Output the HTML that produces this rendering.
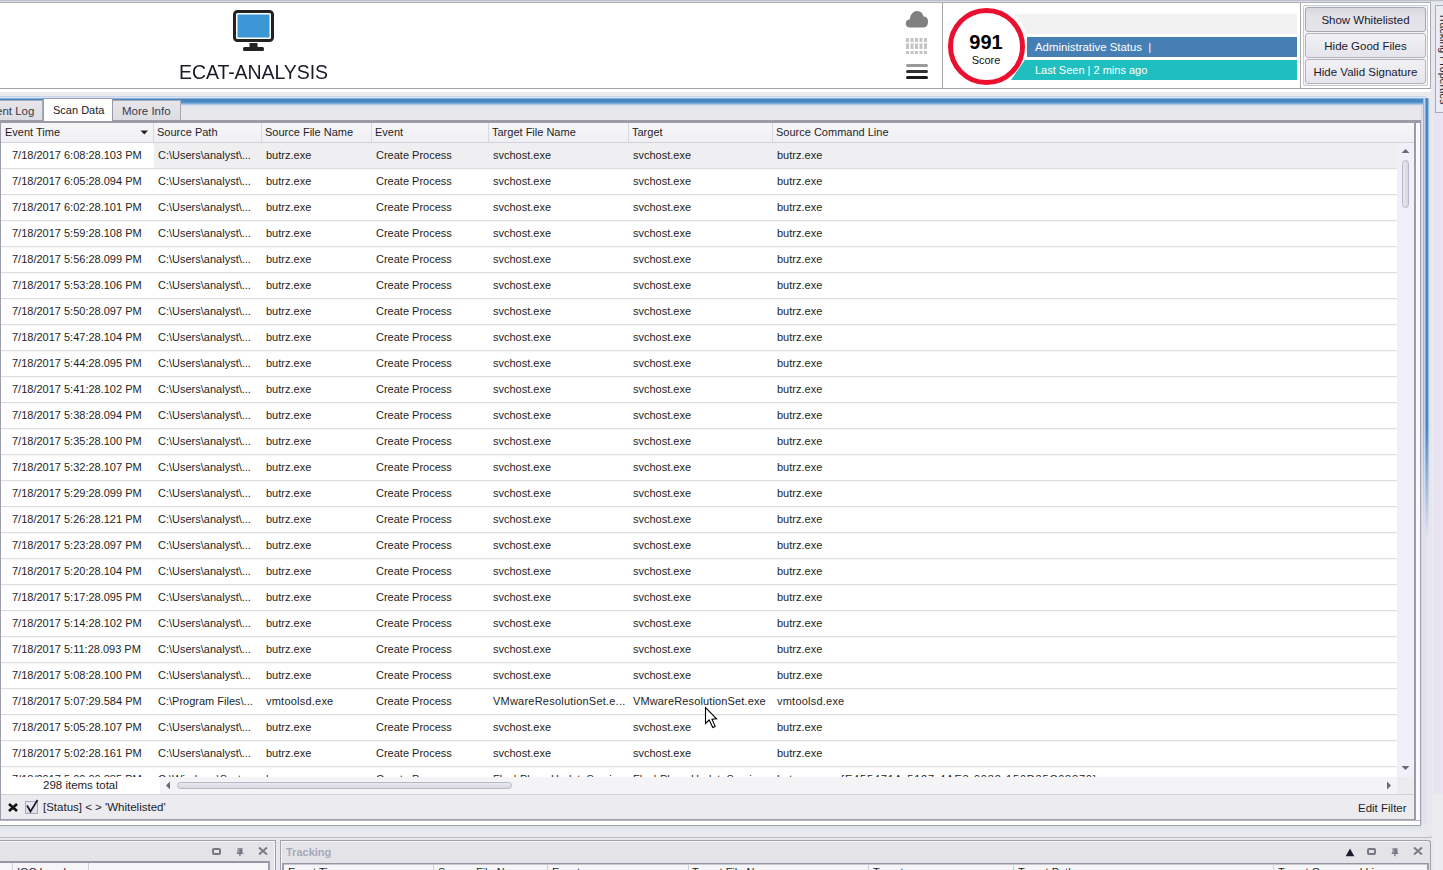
<!DOCTYPE html>
<html><head><meta charset="utf-8"><title>ECAT-ANALYSIS</title>
<style>
*{margin:0;padding:0;box-sizing:border-box}
html,body{width:1443px;height:870px;overflow:hidden}
body{position:relative;background:#e8e8ee;font-family:"Liberation Sans",sans-serif;color:#1e1e24}
.a{position:absolute}
/* header */
#topstrip{left:0;top:0;width:1443px;height:2px;background:linear-gradient(#bcc0cc 0 1px,#dcdee6 1px 2px)}
#hdr{left:0;top:2px;width:1431px;height:87px;background:#fff;border-top:1px solid #b0b0b4;border-right:1px solid #a8a8b0;border-bottom:1px solid #a4a4a8}
#title{left:179px;top:60px;font-size:21px;letter-spacing:-0.1px;transform:scaleX(0.93);transform-origin:0 0;color:#1a1a2a;white-space:nowrap}
.vsep{width:1px;background:#a8a8a8}
#score{left:948px;top:8px;width:77px;height:77px;border-radius:50%;border:5.2px solid #ec1030;background:#fff}
#halo{left:944.2px;top:4.3px;width:84px;height:84px;border-radius:50%;background:#fff}
#n991{left:947px;top:30.5px;width:78px;text-align:center;font-size:20px;font-weight:bold;color:#000}
#nscore{left:947px;top:54px;width:78px;text-align:center;font-size:11px;color:#111}
#bar0{left:1011px;top:14px;width:286px;height:20px;background:#f2f2f2}
#bar1{left:1026.6px;top:37px;width:270.4px;height:20px;background:#467fb4}
#bar2{left:1011px;top:60px;width:286px;height:20px;background:#1fbfbf;clip-path:polygon(13.8px 0,100% 0,100% 100%,0 100%)}
.bt{color:#fff;font-size:11.4px;left:1035px;white-space:nowrap}
#btngrp{left:1303px;top:5px;width:125px;height:81px;border:1px solid #c8c8d0;border-radius:2px;background:#f4f4f8}
.btn{left:1305px;width:121px;height:25px;border:1px solid #b4b4bc;border-radius:3px;background:linear-gradient(#f2f2f6,#e4e4ea);font-size:11.5px;text-align:center;line-height:24px;color:#1a1a2e;white-space:nowrap}
.btn.pressed{background:linear-gradient(#d8d8de,#e2e2e8 40%,#e4e4ea);border-color:#a8a8b0}
/* right side tab */
#rtab{z-index:4;left:1435px;top:5px;width:10px;height:108px;background:#ececf4;border:1px solid #a8acb8;border-right:none}
/* main panel */
#mainbg{left:-4px;top:89px;width:1437px;height:749px;background:#e9e9ee;border-right:1px solid #cccadc;border-bottom:1px solid #bcbcc6;border-bottom-right-radius:4px}
#white1{left:0;top:89px;width:1431px;height:3px;background:#fff}
#blueband{left:0;top:96px;width:1426px;height:11px;background:linear-gradient(#c8d4e8 0 1px,#dce4f8 1px 2px,#88b0d8 2px 3px,#4a88c4 3px 6px,#5a94ca 6px 7px,#80acd8 7px 8px,#b0c8e4 8px 9px,#d4dcec 9px 10px,#e6e8ee 10px)}
#blueR{left:1421px;top:105px;width:11px;height:720px;background:linear-gradient(90deg,#d4d4dc 0 1px,#e4e2ee 1px 4px,#dce2f4 4px 5px,#e8e6f0 5px)}
#blueLine{left:1423px;top:98px;width:8px;height:440px;background:linear-gradient(90deg,#98b8e0 0 1px,#c0d8f4 1px 2px,#7aa8dc 2px 3px,#4a88c4 3px 5px,#a0c0e0 5px 6px,#d8e0ee 6px 7px,#e4e6ee 7px);-webkit-mask-image:linear-gradient(#000 0 330px,transparent 440px);border-top-right-radius:4px}
#edge1432{display:none}
#tabstrip{left:0;top:107px;width:1421px;height:14px;background:#e8e8ec}
.tab{top:100px;height:21px;background:linear-gradient(#e6e6ea,#dcdce2);border:1px solid #a8a8b4;border-bottom:none;font-size:11.5px;color:#2a2a3a;white-space:nowrap;line-height:21px}
#tabsel{left:43px;top:98px;width:70px;height:23px;background:#fff;border:1px solid #9a9aa8;border-bottom:none;font-size:11.5px;color:#1a1a2a;line-height:19px}
#tabline{left:0;top:120px;width:1421px;height:3px;background:#9c9ca8}
#grid{left:0;top:123px;width:1421px;height:697px;background:#fff;border-left:1px solid #9a9caa;border-right:1px solid #a0a4b0;border-bottom:2px solid #9a9caa}
#gridR{left:1414px;top:123px;width:2px;height:697px;background:#9a9cac}
#gridRw{left:1416px;top:123px;width:4px;height:697px;background:#fafafa}
#ghdr{left:1px;top:123px;width:1413px;height:20px;background:linear-gradient(#f6f6f8,#f0f0f4);border-bottom:1px solid #d2d2da}
.hc{top:123px;height:19px;font-size:11px;line-height:19px;color:#1e1e2a;white-space:nowrap}
.hs{top:123px;width:1px;height:19px;background:#d8d8e0}
.row{position:absolute;left:1px;width:1396px;height:26px;border-bottom:1px solid #dcdce2;background:linear-gradient(#f9f9fa 0 1px,#fff 1px)}
.row span{position:absolute;top:0;line-height:25px;font-size:11px;white-space:nowrap;color:#1e1e24}
.row.sel{background:linear-gradient(90deg,#fff 0 153px,#efeff2 153px)}
#rowsclip{left:0;top:0;width:1443px;height:777px;overflow:hidden}
#vscroll{left:1397px;top:143px;width:17px;height:634px;background:#f2eefa}
#vthumb{left:1402px;top:160px;width:7px;height:48px;border:1px solid #b8b8c4;border-radius:4px;background:linear-gradient(90deg,#e8e8ee,#d8d8e0)}
#hscroll{left:160px;top:777px;width:1237px;height:17px;background:#f4f4f6}
#hcorner{left:1397px;top:777px;width:17px;height:17px;background:#ececf0}
#hthumb{left:177px;top:782px;width:335px;height:7px;border:1px solid #b8b8c4;border-radius:4px;background:linear-gradient(#e8e8ee,#d8d8e0)}
#status{left:1px;top:777px;width:159px;height:17px;background:#fff}
#stxt{left:43px;top:779px;font-size:11.5px;color:#1e1e2a;white-space:nowrap}
#filter{left:1px;top:794px;width:1413px;height:25px;background:#ebebf0;border-top:1px solid #d0d2da}
#ftxt{left:43px;top:801px;font-size:11.5px;color:#1e1e2a;white-space:nowrap}
#edit{left:1358px;top:801.5px;font-size:11.5px;color:#1e1e2a;white-space:nowrap}
/* lower area */
#low1{left:0;top:820px;width:1421px;height:17px;background:linear-gradient(#b4b6c0 0 1px,#fcfcfd 1px 5px,#a0a2ac 5px 6px,#e0e0e4 6px 8px,#e6e6ea 8px 10px,#e0e8f8 10px 11px,#e9e9ee 11px 17px);border-bottom-right-radius:0}
#low1v{left:1420px;top:820px;width:1px;height:6px;background:#a0a4b0}
#low1b{left:1421px;top:826px;width:5px;height:5px;border-right:1px solid #e0e8f8;border-bottom:1px solid #e0e8f8}
#lowgap{left:0;top:838px;width:1433px;height:32px;background:#e8e8ec}
#lowR{left:1432px;top:89px;width:11px;height:781px;background:#ebebf0}
#rlav{left:1433px;top:89px;width:10px;height:705px;background:#e8e4f2}
#plL{left:0;top:840px;width:276px;height:30px;background:#e4e4e8;border-top:1px solid #a0a0ac;border-right:1px solid #9c9cac;box-shadow:inset -1px 1px 0 #f6f6f8}
#plR{left:280px;top:840px;width:1151px;height:30px;background:#e4e4e8;border:1px solid #a0a0ac;border-bottom:none;border-top-right-radius:3px;box-shadow:inset 1px 1px 0 #f6f6f8}
#gL{left:0;top:861px;width:270px;height:9px;background:#f6f6f8;border-top:2px solid #9496a4;border-right:2px solid #a0a0ac}
#gR{left:282px;top:863px;width:1147px;height:7px;background:#f6f6f8;border-top:1px solid #9496a4;box-shadow:inset 0 1px 0 #c8c8d0;border-left:2px solid #a0a0ac;border-right:2px solid #a0a0ac}
#trk{left:286px;top:845.5px;font-size:11px;font-weight:bold;color:#a4aaba;white-space:nowrap}
.icon{position:absolute}
.hs2{width:1px;height:8px;background:#d0d0d8}
.bh{top:865px;font-size:11px;line-height:14px;color:#1e1e2a;white-space:nowrap}
</style></head><body>
<div class="a" id="topstrip"></div>
<div class="a" id="hdr"></div>
<!-- monitor icon -->
<svg class="a" style="left:230px;top:8px" width="48" height="46" viewBox="0 0 48 46">
  <rect x="4.5" y="3.5" width="38" height="29" rx="3" ry="3" fill="#fff" stroke="#222" stroke-width="3"/>
  <rect x="7.5" y="6.5" width="32" height="23" fill="#3d97d6"/>
  <rect x="19.5" y="35" width="8" height="4" fill="#222"/>
  <rect x="13" y="39" width="21" height="4" rx="1.5" fill="#222"/>
</svg>
<div class="a" id="title">ECAT-ANALYSIS</div>
<div class="a vsep" style="left:942px;top:3px;height:85px"></div>
<div class="a vsep" style="left:1300px;top:3px;height:85px"></div>
<!-- cloud -->
<svg class="a" style="left:904px;top:9px" width="26" height="20" viewBox="0 0 26 20">
  <path d="M6 18.5 C2.5 18.5 1.5 15.5 1.8 13.8 C2.2 11.5 4 10.3 5.8 10.4 C6 6.5 8.5 2 13 2 C17 2 19 5 19.6 7.6 C21.5 7.2 24 8.8 24 12 C24.2 15 23 18.5 19.5 18.5 Z" fill="#808080"/>
</svg>
<!-- dotted grid -->
<svg class="a" style="left:900px;top:32px" width="32" height="26" viewBox="0 0 32 26">
  <g fill="#c4c4c4">
  <rect x="6.0" y="6" width="3" height="4"/><rect x="6.0" y="11.4" width="3" height="5.6"/><rect x="6.0" y="19" width="3" height="3"/><rect x="10.5" y="6" width="3" height="4"/><rect x="10.5" y="11.4" width="3" height="5.6"/><rect x="10.5" y="19" width="3" height="3"/><rect x="15.0" y="6" width="3" height="4"/><rect x="15.0" y="11.4" width="3" height="5.6"/><rect x="15.0" y="19" width="3" height="3"/><rect x="19.5" y="6" width="3" height="4"/><rect x="19.5" y="11.4" width="3" height="5.6"/><rect x="19.5" y="19" width="3" height="3"/><rect x="24.0" y="6" width="3" height="4"/><rect x="24.0" y="11.4" width="3" height="5.6"/><rect x="24.0" y="19" width="3" height="3"/>
  </g>
</svg>
<!-- hamburger -->
<div class="a" style="left:906px;top:64px;width:22px;height:3px;border-radius:1.5px;background:#999"></div>
<div class="a" style="left:906px;top:70px;width:22px;height:3px;border-radius:1.5px;background:#333"></div>
<div class="a" style="left:906px;top:76px;width:22px;height:3px;border-radius:1.5px;background:#1a1a1a"></div>
<!-- bars -->
<div class="a" id="bar0"></div>
<div class="a" id="halo"></div>
<div class="a" id="bar1"></div>
<div class="a" id="bar2"></div>
<div class="a" id="score"></div>
<div class="a" id="n991">991</div>
<div class="a" id="nscore">Score</div>
<div class="a bt" style="top:41px">Administrative Status &nbsp;|</div>
<div class="a bt" style="top:64px;font-size:11px">Last Seen | 2 mins ago</div>
<!-- buttons -->
<div class="a" id="btngrp"></div>
<div class="a btn pressed" style="top:7px">Show Whitelisted</div>
<div class="a btn" style="top:33px">Hide Good Files</div>
<div class="a btn" style="top:59px">Hide Valid Signature</div>
<div class="a" id="rtab"></div>
<!-- main -->
<div class="a" id="mainbg"></div>
<div class="a" id="lowR"></div>
<div class="a" id="rlav"></div>
<div class="a" id="white1"></div>
<div class="a" id="blueband"></div>
<div class="a" id="blueR"></div>
<div class="a" id="blueLine"></div>
<div class="a" id="edge1432"></div>
<div class="a" id="tabstrip"></div>
<div class="a tab" style="left:-10px;width:53px;padding-left:5px;color:#3a3a4c">ent Log</div>
<div class="a tab" style="left:112px;width:69px;padding-left:9px;color:#3a3a4c">More Info</div>
<div class="a" id="tabline"></div>
<div class="a" id="tabsel" style="padding-left:9px;padding-top:2px;font-size:11px">Scan Data</div>
<div class="a" id="grid"></div>
<div class="a" id="gridRw"></div>
<div class="a" id="gridR"></div>
<div class="a" id="ghdr"></div>
<div class="a hc" style="left:5px">Event Time</div>
<svg class="a" style="left:140px;top:130px" width="9" height="5" viewBox="0 0 9 5"><path d="M0.5 0.5 H8 L4.25 4.5 Z" fill="#222"/></svg>
<div class="a hs" style="left:153px"></div>
<div class="a hc" style="left:157px">Source Path</div>
<div class="a hs" style="left:261px"></div>
<div class="a hc" style="left:265px">Source File Name</div>
<div class="a hs" style="left:371px"></div>
<div class="a hc" style="left:375px">Event</div>
<div class="a hs" style="left:488px"></div>
<div class="a hc" style="left:492px">Target File Name</div>
<div class="a hs" style="left:628px"></div>
<div class="a hc" style="left:632px">Target</div>
<div class="a hs" style="left:772px"></div>
<div class="a hc" style="left:776px">Source Command Line</div>
<div class="a" id="rowsclip">
<div class="row sel" style="top:143px"><span style="left:11px">7/18/2017 6:08:28.103 PM</span><span style="left:157px">C:\Users\analyst\...</span><span style="left:265px">butrz.exe</span><span style="left:375px">Create Process</span><span style="left:492px">svchost.exe</span><span style="left:632px">svchost.exe</span><span style="left:776px">butrz.exe</span></div>
<div class="row" style="top:169px"><span style="left:11px">7/18/2017 6:05:28.094 PM</span><span style="left:157px">C:\Users\analyst\...</span><span style="left:265px">butrz.exe</span><span style="left:375px">Create Process</span><span style="left:492px">svchost.exe</span><span style="left:632px">svchost.exe</span><span style="left:776px">butrz.exe</span></div>
<div class="row" style="top:195px"><span style="left:11px">7/18/2017 6:02:28.101 PM</span><span style="left:157px">C:\Users\analyst\...</span><span style="left:265px">butrz.exe</span><span style="left:375px">Create Process</span><span style="left:492px">svchost.exe</span><span style="left:632px">svchost.exe</span><span style="left:776px">butrz.exe</span></div>
<div class="row" style="top:221px"><span style="left:11px">7/18/2017 5:59:28.108 PM</span><span style="left:157px">C:\Users\analyst\...</span><span style="left:265px">butrz.exe</span><span style="left:375px">Create Process</span><span style="left:492px">svchost.exe</span><span style="left:632px">svchost.exe</span><span style="left:776px">butrz.exe</span></div>
<div class="row" style="top:247px"><span style="left:11px">7/18/2017 5:56:28.099 PM</span><span style="left:157px">C:\Users\analyst\...</span><span style="left:265px">butrz.exe</span><span style="left:375px">Create Process</span><span style="left:492px">svchost.exe</span><span style="left:632px">svchost.exe</span><span style="left:776px">butrz.exe</span></div>
<div class="row" style="top:273px"><span style="left:11px">7/18/2017 5:53:28.106 PM</span><span style="left:157px">C:\Users\analyst\...</span><span style="left:265px">butrz.exe</span><span style="left:375px">Create Process</span><span style="left:492px">svchost.exe</span><span style="left:632px">svchost.exe</span><span style="left:776px">butrz.exe</span></div>
<div class="row" style="top:299px"><span style="left:11px">7/18/2017 5:50:28.097 PM</span><span style="left:157px">C:\Users\analyst\...</span><span style="left:265px">butrz.exe</span><span style="left:375px">Create Process</span><span style="left:492px">svchost.exe</span><span style="left:632px">svchost.exe</span><span style="left:776px">butrz.exe</span></div>
<div class="row" style="top:325px"><span style="left:11px">7/18/2017 5:47:28.104 PM</span><span style="left:157px">C:\Users\analyst\...</span><span style="left:265px">butrz.exe</span><span style="left:375px">Create Process</span><span style="left:492px">svchost.exe</span><span style="left:632px">svchost.exe</span><span style="left:776px">butrz.exe</span></div>
<div class="row" style="top:351px"><span style="left:11px">7/18/2017 5:44:28.095 PM</span><span style="left:157px">C:\Users\analyst\...</span><span style="left:265px">butrz.exe</span><span style="left:375px">Create Process</span><span style="left:492px">svchost.exe</span><span style="left:632px">svchost.exe</span><span style="left:776px">butrz.exe</span></div>
<div class="row" style="top:377px"><span style="left:11px">7/18/2017 5:41:28.102 PM</span><span style="left:157px">C:\Users\analyst\...</span><span style="left:265px">butrz.exe</span><span style="left:375px">Create Process</span><span style="left:492px">svchost.exe</span><span style="left:632px">svchost.exe</span><span style="left:776px">butrz.exe</span></div>
<div class="row" style="top:403px"><span style="left:11px">7/18/2017 5:38:28.094 PM</span><span style="left:157px">C:\Users\analyst\...</span><span style="left:265px">butrz.exe</span><span style="left:375px">Create Process</span><span style="left:492px">svchost.exe</span><span style="left:632px">svchost.exe</span><span style="left:776px">butrz.exe</span></div>
<div class="row" style="top:429px"><span style="left:11px">7/18/2017 5:35:28.100 PM</span><span style="left:157px">C:\Users\analyst\...</span><span style="left:265px">butrz.exe</span><span style="left:375px">Create Process</span><span style="left:492px">svchost.exe</span><span style="left:632px">svchost.exe</span><span style="left:776px">butrz.exe</span></div>
<div class="row" style="top:455px"><span style="left:11px">7/18/2017 5:32:28.107 PM</span><span style="left:157px">C:\Users\analyst\...</span><span style="left:265px">butrz.exe</span><span style="left:375px">Create Process</span><span style="left:492px">svchost.exe</span><span style="left:632px">svchost.exe</span><span style="left:776px">butrz.exe</span></div>
<div class="row" style="top:481px"><span style="left:11px">7/18/2017 5:29:28.099 PM</span><span style="left:157px">C:\Users\analyst\...</span><span style="left:265px">butrz.exe</span><span style="left:375px">Create Process</span><span style="left:492px">svchost.exe</span><span style="left:632px">svchost.exe</span><span style="left:776px">butrz.exe</span></div>
<div class="row" style="top:507px"><span style="left:11px">7/18/2017 5:26:28.121 PM</span><span style="left:157px">C:\Users\analyst\...</span><span style="left:265px">butrz.exe</span><span style="left:375px">Create Process</span><span style="left:492px">svchost.exe</span><span style="left:632px">svchost.exe</span><span style="left:776px">butrz.exe</span></div>
<div class="row" style="top:533px"><span style="left:11px">7/18/2017 5:23:28.097 PM</span><span style="left:157px">C:\Users\analyst\...</span><span style="left:265px">butrz.exe</span><span style="left:375px">Create Process</span><span style="left:492px">svchost.exe</span><span style="left:632px">svchost.exe</span><span style="left:776px">butrz.exe</span></div>
<div class="row" style="top:559px"><span style="left:11px">7/18/2017 5:20:28.104 PM</span><span style="left:157px">C:\Users\analyst\...</span><span style="left:265px">butrz.exe</span><span style="left:375px">Create Process</span><span style="left:492px">svchost.exe</span><span style="left:632px">svchost.exe</span><span style="left:776px">butrz.exe</span></div>
<div class="row" style="top:585px"><span style="left:11px">7/18/2017 5:17:28.095 PM</span><span style="left:157px">C:\Users\analyst\...</span><span style="left:265px">butrz.exe</span><span style="left:375px">Create Process</span><span style="left:492px">svchost.exe</span><span style="left:632px">svchost.exe</span><span style="left:776px">butrz.exe</span></div>
<div class="row" style="top:611px"><span style="left:11px">7/18/2017 5:14:28.102 PM</span><span style="left:157px">C:\Users\analyst\...</span><span style="left:265px">butrz.exe</span><span style="left:375px">Create Process</span><span style="left:492px">svchost.exe</span><span style="left:632px">svchost.exe</span><span style="left:776px">butrz.exe</span></div>
<div class="row" style="top:637px"><span style="left:11px">7/18/2017 5:11:28.093 PM</span><span style="left:157px">C:\Users\analyst\...</span><span style="left:265px">butrz.exe</span><span style="left:375px">Create Process</span><span style="left:492px">svchost.exe</span><span style="left:632px">svchost.exe</span><span style="left:776px">butrz.exe</span></div>
<div class="row" style="top:663px"><span style="left:11px">7/18/2017 5:08:28.100 PM</span><span style="left:157px">C:\Users\analyst\...</span><span style="left:265px">butrz.exe</span><span style="left:375px">Create Process</span><span style="left:492px">svchost.exe</span><span style="left:632px">svchost.exe</span><span style="left:776px">butrz.exe</span></div>
<div class="row" style="top:689px"><span style="left:11px">7/18/2017 5:07:29.584 PM</span><span style="left:157px">C:\Program Files\...</span><span style="left:265px"><i style='font-style:normal;letter-spacing:0.22px'>vmtoolsd.exe</i></span><span style="left:375px">Create Process</span><span style="left:492px"><i style='font-style:normal;letter-spacing:0.22px'>VMwareResolutionSet.e...</i></span><span style="left:632px"><i style='font-style:normal;letter-spacing:0.14px'>VMwareResolutionSet.exe</i></span><span style="left:776px"><i style='font-style:normal;letter-spacing:0.22px'>vmtoolsd.exe</i></span></div>
<div class="row" style="top:715px"><span style="left:11px">7/18/2017 5:05:28.107 PM</span><span style="left:157px">C:\Users\analyst\...</span><span style="left:265px">butrz.exe</span><span style="left:375px">Create Process</span><span style="left:492px">svchost.exe</span><span style="left:632px">svchost.exe</span><span style="left:776px">butrz.exe</span></div>
<div class="row" style="top:741px"><span style="left:11px">7/18/2017 5:02:28.161 PM</span><span style="left:157px">C:\Users\analyst\...</span><span style="left:265px">butrz.exe</span><span style="left:375px">Create Process</span><span style="left:492px">svchost.exe</span><span style="left:632px">svchost.exe</span><span style="left:776px">butrz.exe</span></div>
<div class="row" style="top:767px"><span style="left:11px">7/18/2017 5:00:00.885 PM</span><span style="left:157px">C:\Windows\Syste...</span><span style="left:265px">lsass.exe</span><span style="left:375px">Create Process</span><span style="left:492px">FlashPlayerUpdateServic...</span><span style="left:632px">FlashPlayerUpdateServic...</span><span style="left:776px">butrz.exe <b style='position:absolute;left:63.5px;font-weight:normal;letter-spacing:0.8px'>{E455471A-5127-4AE3-9082-150D35C08870}</b></span></div>
</div>
<div class="a" id="vscroll"></div>
<svg class="a" style="left:1401px;top:148px" width="9" height="6" viewBox="0 0 9 6"><path d="M0.5 5 L4.5 1 L8.5 5 Z" fill="#6a6a78"/></svg>
<div class="a" id="vthumb"></div>
<svg class="a" style="left:1401px;top:765px" width="9" height="6" viewBox="0 0 9 6"><path d="M0.5 1 L4.5 5 L8.5 1 Z" fill="#6a6a78"/></svg>
<div class="a" id="status"></div>
<div class="a" id="stxt">298 items total</div>
<div class="a" id="hscroll"></div>
<svg class="a" style="left:165px;top:781px" width="6" height="9" viewBox="0 0 6 9"><path d="M5 0.5 L1 4.5 L5 8.5 Z" fill="#6a6a78"/></svg>
<div class="a" id="hthumb"></div>
<svg class="a" style="left:1386px;top:781px" width="6" height="9" viewBox="0 0 6 9"><path d="M1 0.5 L5 4.5 L1 8.5 Z" fill="#6a6a78"/></svg>
<div class="a" id="hcorner"></div>
<div class="a" id="filter"></div>
<svg class="a" style="left:7px;top:802px" width="12" height="11" viewBox="0 0 12 11"><path d="M2 2 L10 9 M10 2 L2 9" stroke="#111" stroke-width="2.6" stroke-linecap="butt"/></svg>
<div class="a" style="left:25px;top:801px;width:13px;height:13px;border:1px solid #a8a8b8;background:linear-gradient(#e8e8ee,#dcdce4)"></div>
<svg class="a" style="left:25px;top:797px" width="16" height="17" viewBox="0 0 16 17"><path d="M2 8.5 L5.5 14.5 L12.5 3" fill="none" stroke="#1a1a2a" stroke-width="1.7"/></svg>
<div class="a" id="ftxt">[Status] &lt; &gt; 'Whitelisted'</div>
<div class="a" id="edit">Edit Filter</div>
<div class="a" id="low1"></div>
<div class="a" id="low1v"></div>
<div class="a" id="low1b"></div>
<div class="a" id="lowgap"></div>
<div class="a" id="plL"></div>
<div class="a" id="plR"></div>
<div class="a" id="gL"></div>
<div class="a" id="gR"></div>
<div class="a" id="trk">Tracking</div>
<div class="a hs2" style="left:12px;top:863px"></div>
<div class="a hs2" style="left:88px;top:863px"></div>
<div class="a bh" style="left:17px">IOC Level</div>
<div class="a hs2" style="left:433px;top:864px"></div>
<div class="a hs2" style="left:547px;top:864px"></div>
<div class="a hs2" style="left:688px;top:864px"></div>
<div class="a hs2" style="left:868px;top:864px"></div>
<div class="a hs2" style="left:1013px;top:864px"></div>
<div class="a hs2" style="left:1273px;top:864px"></div>
<div class="a bh" style="left:288px">Event Time</div>
<div class="a bh" style="left:438px">Source File Name</div>
<div class="a bh" style="left:552px">Event</div>
<div class="a bh" style="left:692px">Target File Name</div>
<div class="a bh" style="left:873px">Target</div>
<div class="a bh" style="left:1018px">Target Path</div>
<div class="a bh" style="left:1278px">Target Command Line</div>
<!-- left panel icons -->
<svg class="a" style="left:212px;top:847.5px" width="9" height="7" viewBox="0 0 9 7"><rect x="1" y="1" width="7" height="5" rx="1" fill="none" stroke="#767886" stroke-width="2"/></svg>
<svg class="a" style="left:236px;top:847.5px" width="8" height="9" viewBox="0 0 8 9"><path d="M1.5 0.2 H6.5 V4.6 L7.6 5.9 H0.2 L1.5 4.6 Z M3.3 5.8 H4.6 V8.2 H3.3 Z" fill="#767886"/><rect x="2.4" y="1" width="0.9" height="3.6" fill="#b4b6c2"/></svg>
<svg class="a" style="left:258px;top:847px" width="10" height="8" viewBox="0 0 10 8"><path d="M1 0.5 L9 7.5 M9 0.5 L1 7.5" stroke="#7a7c88" stroke-width="2"/></svg>
<!-- right panel icons -->
<svg class="a" style="left:1345px;top:848px" width="10" height="9" viewBox="0 0 10 9"><path d="M5 0.5 L9.3 8.3 H0.7 Z" fill="#1c1c30"/></svg>
<svg class="a" style="left:1367px;top:847.5px" width="9" height="7" viewBox="0 0 9 7"><rect x="1" y="1" width="7" height="5" rx="1" fill="none" stroke="#767886" stroke-width="2"/></svg>
<svg class="a" style="left:1391px;top:847.5px" width="8" height="9" viewBox="0 0 8 9"><path d="M1.5 0.2 H6.5 V4.6 L7.6 5.9 H0.2 L1.5 4.6 Z M3.3 5.8 H4.6 V8.2 H3.3 Z" fill="#767886"/><rect x="2.4" y="1" width="0.9" height="3.6" fill="#b4b6c2"/></svg>
<svg class="a" style="left:1413px;top:847px" width="10" height="8" viewBox="0 0 10 8"><path d="M1 0.5 L9 7.5 M9 0.5 L1 7.5" stroke="#7a7c88" stroke-width="2"/></svg>
<!-- vertical tab text -->
<div class="a" style="left:1438px;top:13px;writing-mode:vertical-rl;font-size:10.6px;line-height:12px;color:#1e1e2a;white-space:nowrap;z-index:5">Tracking Properties</div>
<!-- cursor -->
<svg class="a" style="left:704px;top:706px" width="14" height="23" viewBox="0 0 14 23"><path d="M1.5 1.5 L1.5 17.5 L5.2 14 L8.8 21.6 L11.2 20.4 L8 13.2 L12.6 12.8 Z" fill="#fff" stroke="#000" stroke-width="1.1" stroke-linejoin="miter"/></svg>
</body></html>
